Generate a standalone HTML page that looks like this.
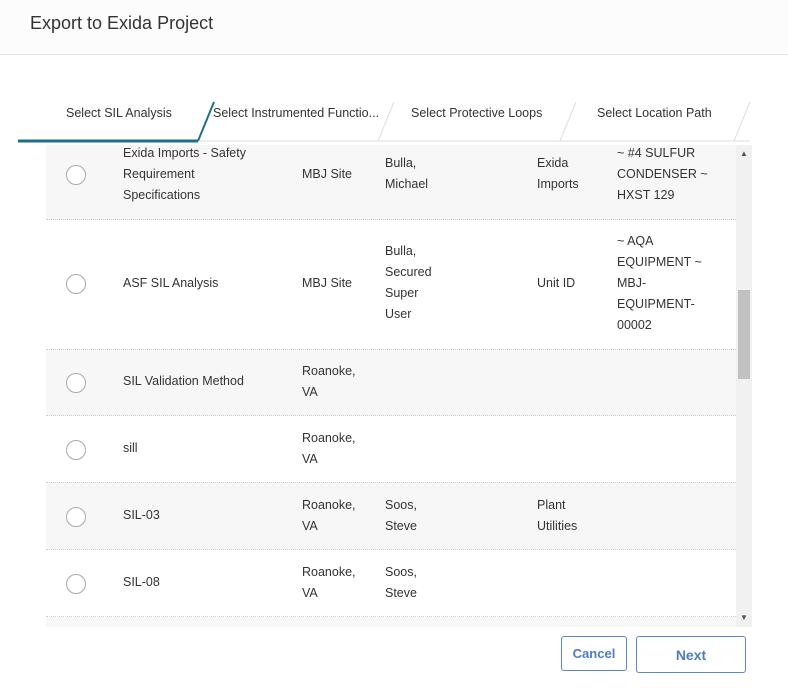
<!DOCTYPE html>
<html><head><style>
body{margin:0;width:788px;height:691px;background:#fff;font-family:"Liberation Sans",sans-serif;position:relative;overflow:hidden;color:#333}
.hdr{position:absolute;left:0;top:0;width:788px;height:54px;border-bottom:1px solid #e6e6e6;background:#fdfcfd}
.hdr span{position:absolute;left:30px;top:13px;font-size:18px;color:#333}
.tab{position:absolute;top:106px;font-size:12.5px;color:#333}
.row{position:absolute;left:46px;width:690px;border-bottom:1px dotted #ccc;font-size:12.5px;color:#333}
.g{background:#f7f7f7}
.c{position:absolute;line-height:21px}
.rad{position:absolute;left:20px;width:18px;height:18px;border:1px solid #aaa;border-radius:50%;background:#fff}
.btn{position:absolute;border:1px solid #5b87c7;border-radius:3px;color:#4f7cc4;font-weight:bold;text-align:center;background:#fff}
</style></head><body>
<div class="hdr"><span>Export to Exida Project</span></div>
<div class="tab" style="left:66px">Select SIL Analysis</div>
<div class="tab" style="left:213px">Select Instrumented Functio...</div>
<div class="tab" style="left:411px">Select Protective Loops</div>
<div class="tab" style="left:597px">Select Location Path</div>
<svg style="position:absolute;left:0;top:95px" width="788" height="52">
<line x1="200" y1="46" x2="750" y2="46" stroke="#eee" stroke-width="2"/>
<line x1="18" y1="46" x2="198" y2="46" stroke="#1f6f86" stroke-width="3"/>
<line x1="198" y1="46" x2="214" y2="7" stroke="#1f6f86" stroke-width="2"/>
<line x1="378" y1="46" x2="394" y2="7" stroke="#ddd"/>
<line x1="560" y1="46" x2="576" y2="7" stroke="#ddd"/>
<line x1="734" y1="46" x2="750" y2="7" stroke="#ddd"/>
</svg>
<div style="position:absolute;left:46px;top:145px;width:690px;height:482px;overflow:hidden">
</div>
<div class="row g" style="top:145px;height:74px"><div class="rad" style="top:20px"></div>
<div class="c" style="left:77px;top:-2px">Exida Imports - Safety<br>Requirement<br>Specifications</div>
<div class="c" style="left:256px;top:19px">MBJ Site</div>
<div class="c" style="left:339px;top:8px">Bulla,<br>Michael</div>
<div class="c" style="left:491px;top:8px">Exida<br>Imports</div>
<div class="c" style="left:571px;top:-2px">~ #4 SULFUR<br>CONDENSER ~<br>HXST 129</div></div>
<div class="row" style="top:220px;height:129px"><div class="rad" style="top:54px"></div>
<div class="c" style="left:77px;top:53px">ASF SIL Analysis</div>
<div class="c" style="left:256px;top:53px">MBJ Site</div>
<div class="c" style="left:339px;top:21px">Bulla,<br>Secured<br>Super<br>User</div>
<div class="c" style="left:491px;top:53px">Unit ID</div>
<div class="c" style="left:571px;top:11px">~ AQA<br>EQUIPMENT ~<br>MBJ-<br>EQUIPMENT-<br>00002</div></div>
<div class="row g" style="top:350px;height:65px"><div class="rad" style="top:23px"></div>
<div class="c" style="left:77px;top:21px">SIL Validation Method</div>
<div class="c" style="left:256px;top:11px">Roanoke,<br>VA</div></div>
<div class="row" style="top:416px;height:66px"><div class="rad" style="top:24px"></div>
<div class="c" style="left:77px;top:22px">sill</div>
<div class="c" style="left:256px;top:12px">Roanoke,<br>VA</div></div>
<div class="row g" style="top:483px;height:66px"><div class="rad" style="top:24px"></div>
<div class="c" style="left:77px;top:22px">SIL-03</div>
<div class="c" style="left:256px;top:12px">Roanoke,<br>VA</div>
<div class="c" style="left:339px;top:12px">Soos,<br>Steve</div>
<div class="c" style="left:491px;top:12px">Plant<br>Utilities</div></div>
<div class="row" style="top:550px;height:66px"><div class="rad" style="top:24px"></div>
<div class="c" style="left:77px;top:22px">SIL-08</div>
<div class="c" style="left:256px;top:12px">Roanoke,<br>VA</div>
<div class="c" style="left:339px;top:12px">Soos,<br>Steve</div></div>
<div style="position:absolute;left:46px;top:617px;width:690px;height:10px;background:#f7f7f7"></div>
<div style="position:absolute;left:736px;top:145px;width:16px;height:482px;background:#f1f1f1"></div>
<div style="position:absolute;left:738px;top:290px;width:12px;height:89px;background:#c1c1c1"></div>
<div style="position:absolute;left:740px;top:149px;font-size:8px;color:#555">▲</div>
<div style="position:absolute;left:740px;top:613px;font-size:8px;color:#555">▼</div>
<div class="btn" style="left:561px;top:636px;width:64px;height:33px;line-height:33px;font-size:13px">Cancel</div>
<div class="btn" style="left:636px;top:636px;width:108px;height:35px;line-height:36px;font-size:14px">Next</div>
</body></html>
